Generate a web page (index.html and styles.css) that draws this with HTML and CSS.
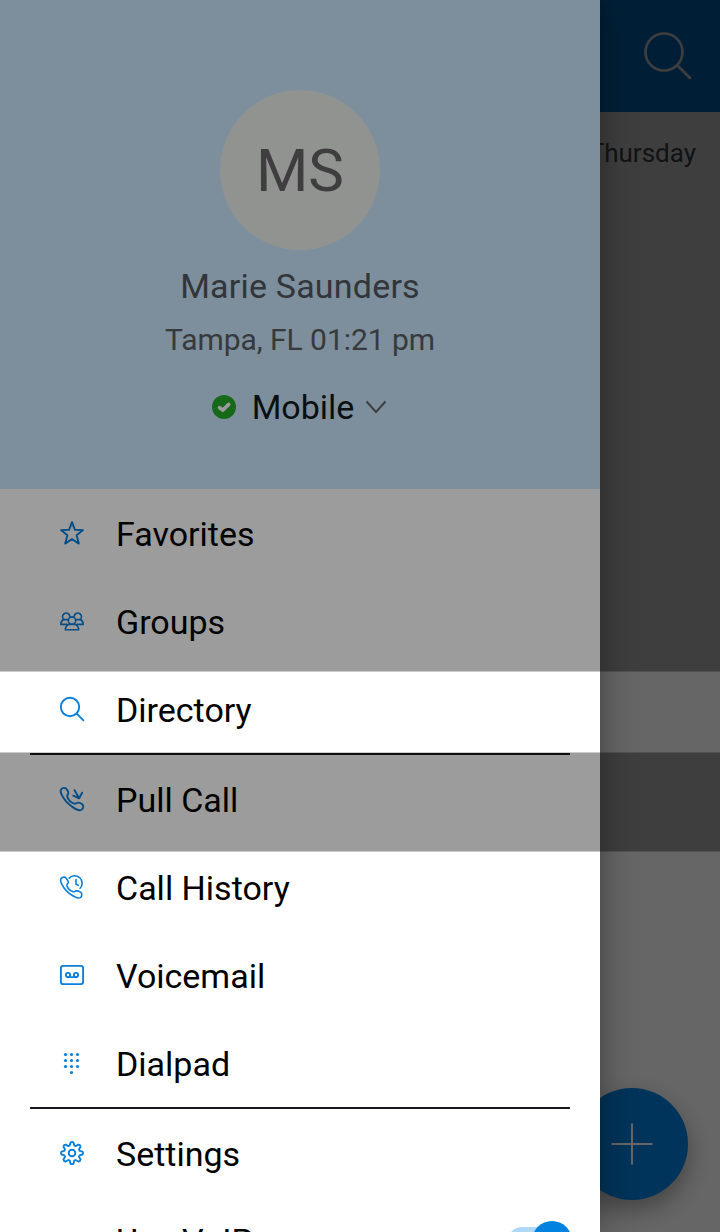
FILE: index.html
```
<!DOCTYPE html>
<html lang="en">
<head>
    <meta charset="UTF-8">
    <meta name="viewport" content="width=device-width, initial-scale=1.0">
    <title>Navigation drawer</title>
    <link rel="stylesheet" href="styles.css">
</head>
<body>
    <div class="screen">
        <main class="page">
            <div class="app-bar">
                <svg class="search" viewBox="0 0 48 48"><circle cx="20" cy="20" r="18.500"/><path d="M33.500 33.500 46 46"/></svg>
            </div>
            <div class="date">Thursday</div>
            <button class="fab" aria-label="Add">
                <svg viewBox="0 0 42 42"><path d="M21 0.500v41M0.500 21h41"/></svg>
            </button>
        </main>
        <div class="scrim"></div>

        <aside class="drawer">
            <div class="profile">
                <div class="avatar">MS</div>
                <div class="name">Marie Saunders</div>
                <div class="location">Tampa, FL 01:21 pm</div>
                <div class="status">
                    <svg class="status-icon" viewBox="0 0 24 24"><circle cx="12" cy="12" r="12"/><path d="m7.500 12.600 3.200 2.600 6-5.800"/></svg>
                    <span>Mobile</span>
                    <svg class="chevron" viewBox="0 0 20 12"><path d="m.5.500 9.500 10.500L19.500.500"/></svg>
                </div>
            </div>

            <nav class="menu">
                <a class="item">
                    <svg class="icon" viewBox="0 0 24 24"><path d="m12 1.200 2.900 7.600 8.100.3-6.400 5.100 2.200 8.400-6.800-4.600-6.800 4.600 2.200-8.400L1 9.100l8.100-.3z"/></svg>
                    <span>Favorites</span>
                </a>
                <a class="item">
                    <svg class="icon thin" viewBox="0 0 24 24">
                        <path d="M3.900 10.600A3.700 3.700 0 1 1 9.900 7.400M14.100 7.400a3.700 3.700 0 1 1 6 3.200"/>
                        <circle cx="12" cy="11.600" r="3.700"/>
                        <path d="M3.900 10.600C1.900 11.300.8 13 .8 15.400h6M3.900 10.600h4M20.100 10.600c2 .7 3.100 2.400 3.100 4.800h-6M20.100 10.600h-4"/>
                        <path d="M8.400 15.400h7.200c1.800.7 2.900 2.500 3.100 5.400H5.300c.2-2.900 1.300-4.700 3.100-5.400"/>
                    </svg>
                    <span>Groups</span>
                </a>
                <a class="item">
                    <svg class="icon" viewBox="0 0 24 24"><circle cx="10" cy="10" r="9.200"/><path d="m16.700 16.700 6.700 6.700"/></svg>
                    <span>Directory</span>
                </a>
                <hr>
                <a class="item">
                    <svg class="icon" viewBox="0 0 24 24">
                        <path d="M1.200 2.300C2.800.6 5 .4 6.300 1.900c1.300 1.400 2.400 3 1.900 4.800-.3 1.100-1.300 1.800-1 2.900.9 3.300 3.800 6 7.100 7.100 1.100.3 1.800-.6 2.900-.9 1.800-.5 3.500.3 5 1.500 1.500 1.300 1.500 3.500-.2 5.100-2.300 2-6.600-.4-9.300-2.300C7.500 16.600 3.600 12.100 1.400 7.200.7 5.600.3 3.500 1.200 2.300z"/>
                        <path d="m14.600 3.200 4.600 8.100M13.300 8.700l5.900 2.600 2.900-5.600"/>
                    </svg>
                    <span>Pull Call</span>
                </a>
                <a class="item">
                    <svg class="icon thin" viewBox="0 0 24 24">
                        <path d="M1.200 3.300c1.500-1.400 3.600-1.700 4.800-.3 1.300 1.500 2.700 3.200 2.200 4.800-.4 1.200-1.600 1.800-1.300 2.900.9 2.900 3.300 4.900 6.200 6 1.100.4 1.900-.6 3-.8 1.800-.3 3.400.4 4.800 1.500 1.500 1.300 1.100 3.600-.4 5.100-1.400 1.200-5.200-.2-7.700-1.700C7.900 17.900 3.800 13.500 1.400 8.300.7 6.700.3 4.400 1.200 3.300z"/>
                        <path d="M9.200 3.100a7.400 7.400 0 1 1 10.900 10.200M16 4.500v4.700l2.300 1.200"/>
                    </svg>
                    <span>Call History</span>
                </a>
                <a class="item">
                    <svg class="icon" viewBox="0 0 24 24"><rect x=".9" y="2.900" width="22.200" height="18.200" rx="2"/><circle cx="8" cy="12" r="2.100"/><circle cx="16" cy="12" r="2.100"/><path d="M8 14.100h8"/></svg>
                    <span>Voicemail</span>
                </a>
                <a class="item">
                    <svg class="icon dots" viewBox="0 0 24 24">
                        <circle cx="5.500" cy="3.500" r="1.600"/><circle cx="11.500" cy="3.500" r="1.600"/><circle cx="17.500" cy="3.500" r="1.600"/>
                        <circle cx="5.500" cy="9.500" r="1.600"/><circle cx="11.500" cy="9.500" r="1.600"/><circle cx="17.500" cy="9.500" r="1.600"/>
                        <circle cx="5.500" cy="15.500" r="1.600"/><circle cx="11.500" cy="15.500" r="1.600"/><circle cx="17.500" cy="15.500" r="1.600"/>
                        <circle cx="11.500" cy="21.500" r="1.600"/>
                    </svg>
                    <span>Dialpad</span>
                </a>
                <hr>
                <a class="item">
                    <svg class="icon" viewBox="0 0 24 24">
                        <path d="M10.500 1.500q1.500-1 3 0l.8 3 1.300.6 2.800-1.500q1.900.1 2.100 2.100l-1.500 2.700.6 1.400 2.900.8q1 1.400 0 2.900l-2.900.8-.6 1.400 1.500 2.700q-.2 1.900-2.100 2.100l-2.800-1.500-1.300.6-.8 3q-1.500 1-3 0l-.8-3-1.300-.6-2.800 1.500q-1.900-.2-2.100-2.100L5 15.700l-.6-1.400-2.900-.8q-1-1.500 0-2.900l2.900-.8.6-1.400-1.500-2.700q.2-2 2.100-2.100l2.800 1.500 1.300-.6z"/>
                        <circle cx="12" cy="12" r="3.300"/>
                    </svg>
                    <span>Settings</span>
                </a>
                <div class="item voip">
                    <span>Use VoIP</span>
                    <div class="toggle"><div class="knob"></div></div>
                </div>
            </nav>
        </aside>

        <div class="dim dim-top"></div>
        <div class="dim dim-middle"></div>
    </div>
</body>
</html>
```
FILE: styles.css
```
* {
    box-sizing: border-box;
}
body {
    margin: 0;
    font-family: Roboto, sans-serif;
    color: #000;
}
svg {
    display: block;
    fill: none;
    overflow: visible;
}
.screen {
    position: relative;
    width: 720px;
    height: 1232px;
    overflow: hidden;
}

/* page behind the drawer */
.page {
    height: 1232px;
    background: #fff;
}
.app-bar {
    height: 112px;
    background: #0082e0;
    display: flex;
    justify-content: flex-end;
    align-items: center;
    padding-right: 28px;
}
.search {
    width: 48px;
    height: 48px;
    stroke: #fff;
    stroke-width: 2.6;
    stroke-linecap: round;
}
.date {
    padding: 26px 24px 0;
    text-align: right;
    font-size: 26px;
    line-height: 30px;
    color: #4a4f55;
}
.fab {
    position: absolute;
    right: 32px;
    bottom: 32px;
    width: 112px;
    height: 112px;
    display: flex;
    align-items: center;
    justify-content: center;
    border: 0;
    border-radius: 50%;
    background: #0082e0;
    box-shadow: 0 10px 24px rgba(0, 0, 0, 0.35);
}
.fab svg {
    width: 42px;
    height: 42px;
    stroke: #fff;
    stroke-width: 2;
}
.scrim {
    position: absolute;
    inset: 0;
    background: rgba(0, 0, 0, 0.6);
}

.drawer {
    position: absolute;
    top: 0;
    left: 0;
    width: 600px;
    height: 1232px;
    background: #fff;
    box-shadow: 0 0 32px rgba(0, 0, 0, 0.4);
    overflow: hidden;
}
.profile {
    height: 489px;
    padding-top: 90px;
    display: flex;
    flex-direction: column;
    align-items: center;
    background: #cdeaff;
}
.avatar {
    width: 160px;
    height: 160px;
    border-radius: 50%;
    background: #eef1ee;
    color: #666;
    font-size: 60px;
    line-height: 162px;
    text-align: center;
}
.name {
    margin-top: 16px;
    font-size: 34px;
    line-height: 40px;
    letter-spacing: 0.2px;
    color: #53585d;
}
.location {
    margin-top: 16px;
    font-size: 30px;
    line-height: 36px;
    letter-spacing: -0.05px;
    color: #5b6064;
}
.status {
    margin-top: 29px;
    padding-right: 2px;
    display: flex;
    align-items: center;
    font-size: 34px;
    line-height: 40px;
    color: #121a20;
}
.status-icon {
    width: 24px;
    height: 24px;
    margin-right: 16px;
    fill: #26ac2c;
}
.status-icon path {
    fill: none;
    stroke: #fff;
    stroke-width: 3.6;
    stroke-linecap: round;
    stroke-linejoin: round;
}
.chevron {
    width: 20px;
    height: 12px;
    margin-left: 12px;
    stroke: #62676c;
    stroke-width: 2;
}

.item {
    display: flex;
    align-items: center;
    height: 88px;
    padding: 2px 28px 0 60px;
    font-size: 34px;
    line-height: 40px;
}
.icon {
    width: 24px;
    height: 24px;
    margin: -2px 32px 0 0;
    stroke: #0a7fdb;
    stroke-width: 1.9;
    stroke-linejoin: round;
    stroke-linecap: round;
}
.icon.thin {
    stroke-width: 1.6;
}
.icon.dots {
    fill: #0a7fdb;
    stroke: none;
}
hr {
    height: 2px;
    margin: 0 30px;
    border: 0;
    background: #17171b;
}
.voip {
    height: 86px;
    justify-content: space-between;
    padding-left: 116px;
}
.toggle {
    width: 64px;
    height: 28px;
    display: flex;
    align-items: center;
    justify-content: flex-end;
    border-radius: 14px;
    background: #b0d8f6;
}
.knob {
    width: 40px;
    height: 40px;
    border-radius: 50%;
    background: #0082e0;
    flex: none;
}

/* everything except the highlighted row is darkened */
.dim {
    position: absolute;
    left: 0;
    width: 720px;
    background: rgba(0, 0, 0, 0.39) padding-box;
    border: 0 solid rgba(0, 0, 0, 0.2);
}
.dim-top {
    top: 0;
    height: 672px;
    border-bottom-width: 1px;
}
.dim-middle {
    top: 752px;
    height: 100px;
    border-top-width: 1px;
    border-bottom-width: 1px;
}
```
